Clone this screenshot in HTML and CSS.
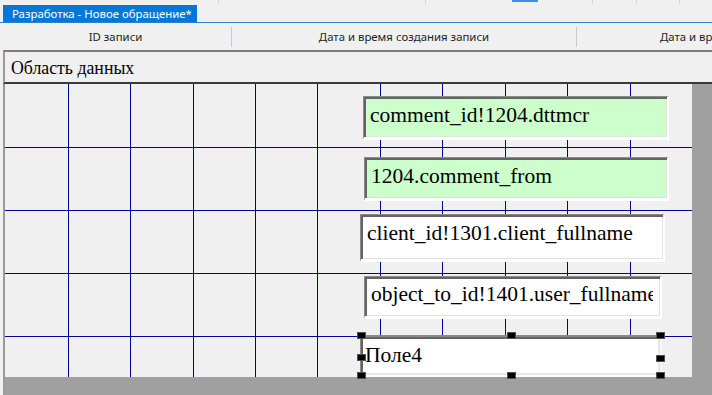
FILE: index.html
```html
<!DOCTYPE html>
<html lang="ru">
<head>
<meta charset="utf-8">
<title>Разработка - Новое обращение*</title>
<link rel="stylesheet" href="styles.css">
</head>
<body>
<div class="topstrip">
  <span class="seg s1"></span>
  <span class="seg s2"></span>
  <span class="seg s3"><i class="activebar"></i></span>
  <span class="seg s4"></span>
  <span class="seg s5"></span>
  <span class="seg s6"></span>
</div>
<div class="tabbar">
  <div class="tab">Разработка - Новое обращение*</div>
</div>
<div class="header">
  <div class="col c1">ID записи</div>
  <div class="col c2">Дата и время создания записи</div>
  <div class="col c3">Дата и время изменения записи</div>
</div>
<div class="designer">
  <div class="section">Область данных</div>
  <div class="workspace">
    <div class="canvas">
      <div class="field green f1"><span class="txt">comment_id!1204.dttmcr</span></div>
      <div class="field green f2"><span class="txt">1204.comment_from</span></div>
      <div class="field f3"><span class="txt">client_id!1301.client_fullname</span></div>
      <div class="field f4"><span class="txt">object_to_id!1401.user_fullname</span></div>
      <div class="field selected f5"><span class="txt">Поле4</span>
        <span class="h tl"></span><span class="h tm"></span><span class="h tr"></span>
        <span class="h ml"></span><span class="h mr"></span>
        <span class="h bl"></span><span class="h bm"></span><span class="h br"></span>
      </div>
    </div>
  </div>
</div>
</body>
</html>
```
FILE: styles.css
```css
html, body {
  margin: 0;
  padding: 0;
}
body {
  width: 712px;
  height: 395px;
  overflow: hidden;
  background: #f0f0f0;
  font-family: "Noto Sans", "Liberation Sans", sans-serif;
}

.topstrip {
  display: flex;
  height: 5px;
}
.seg {
  display: block;
  height: 4px;
  border-right: 1px solid #d2d2d6;
  flex: 0 0 auto;
}
.s1 { width: 218px; }
.s2 { width: 206px; }
.s3 { width: 166px; }
.s4 { width: 43px; }
.s5 { width: 42px; }
.s6 { width: 30px; border-right: none; }
.activebar {
  display: block;
  margin-left: 86px;
  width: 26px;
  height: 2px;
  background: #3c8ee0;
}

.tabbar {
  height: 17px;
  border-bottom: 1px solid #2a7fd4;
  padding-left: 3px;
}
.tab {
  display: inline-block;
  height: 17px;
  width: 194px;
  background: #0078d7;
  color: #ffffff;
  font-size: 11.4px;
  line-height: 17px;
  padding-left: 9px;
  box-sizing: border-box;
  white-space: nowrap;
  overflow: hidden;
}

.header {
  display: flex;
  height: 27px;
  align-items: center;
  overflow: hidden;
  white-space: nowrap;
}
.col {
  flex: 0 0 auto;
  text-align: center;
  font-size: 11.4px;
  color: #1e1e1e;
  height: 20px;
  line-height: 19px;
  overflow: hidden;
}
.c1 { width: 231px; border-right: 1px solid #c9c9d2; }
.c2 { width: 344px; border-right: 1px solid #c9c9d2; }
.c3 { width: 346px; }

.designer {
  margin-left: 3px;
  border-left: 2px solid #9a9a9a;
  height: 345px;
  display: flex;
  flex-direction: column;
}
.section {
  border-top: 2px solid #7c7c7c;
  border-bottom: 2px solid #3a3a3a;
  border-left: 2px solid #9a9a9a;
  margin-left: -2px;
  height: 30px;
  line-height: 32px;
  padding-left: 6px;
  font-family: "Liberation Serif", "Times New Roman", serif;
  font-size: 17.8px;
  color: #000;
}
.workspace {
  flex: 1;
  background: #a0a0a0;
}
.canvas {
  position: relative;
  width: 687px;
  height: 293px;
  background-color: #f0f0f0;
  background-image:
    linear-gradient(#000096, #000096), linear-gradient(#000096, #000096),
    linear-gradient(#000096, #000096), linear-gradient(#000096, #000096),
    linear-gradient(#000096, #000096), linear-gradient(#000096, #000096),
    linear-gradient(#000096, #000096), linear-gradient(#000096, #000096),
    linear-gradient(#000096, #000096), linear-gradient(#000096, #000096),
    linear-gradient(#000096, #000096), linear-gradient(#000096, #000096),
    linear-gradient(#000096, #000096), linear-gradient(#000096, #000096);
  background-repeat: no-repeat;
  background-size:
    1px 100%, 1px 100%, 1px 100%, 1px 100%, 1px 100%,
    1px 100%, 1px 100%, 1px 100%, 1px 100%, 1px 100%,
    100% 1px, 100% 1px, 100% 1px, 100% 1px;
  background-position:
    63px 0, 125px 0, 188px 0, 250px 0, 312px 0,
    375px 0, 437px 0, 500px 0, 562px 0, 625px 0,
    0 63px, 0 126px, 0 189px, 0 252px;
}

.field {
  position: absolute;
  box-sizing: border-box;
  background: #ffffff;
  border-top: 1px solid #8a8a8a;
  border-left: 1px solid #8a8a8a;
  border-right: 2px solid #ffffff;
  border-bottom: 3px solid #ffffff;
  box-shadow: inset 2px 2px 0 #646464, inset -1px -1px 0 #e2e2e2;
  font-family: "Liberation Serif", "Times New Roman", serif;
  font-size: 21.5px;
  line-height: 24px;
  color: #000;
  padding: 6px 0 0 6px;
  white-space: nowrap;
  overflow: hidden;
}
.txt {
  display: block;
  overflow: hidden;
  white-space: nowrap;
}
.green { background: #ccffcc; }
.f1 { left: 358px; top: 12px; width: 306px; height: 44px; }
.f2 { left: 359px; top: 73px; width: 305px; height: 44px; }
.f3 { left: 355px; top: 130px; width: 305px; height: 48px; }
.f4 { left: 359px; top: 192px; width: 298px; height: 43px; padding-top: 5px; padding-right: 7px; }
.f5 {
  left: 355px; top: 251px; width: 302px; height: 42px;
  overflow: visible;
  padding: 6px 0 0 4px;
  border-top: 2px solid #8a8a8a;
  border-left: 1px solid #8a8a8a;
  border-right: 2px solid #f6f6f6;
  border-bottom: 2px solid #ffffff;
  box-shadow: inset 2px 2px 0 #646464, inset -2px -2px 0 #e6e6e6;
}
.h {
  position: absolute;
  width: 7px;
  height: 5px;
  background: #000;
  border: 1px solid #505050;
}
.tl { left: -4px; top: -5px; }
.tm { left: 146px; top: -5px; }
.tr { left: 295px; top: -5px; }
.ml { left: -4px; top: 17px; }
.mr { left: 295px; top: 18px; }
.bl { left: -4px; top: 35px; }
.bm { left: 146px; top: 35px; }
.br { left: 295px; top: 35px; }
```
